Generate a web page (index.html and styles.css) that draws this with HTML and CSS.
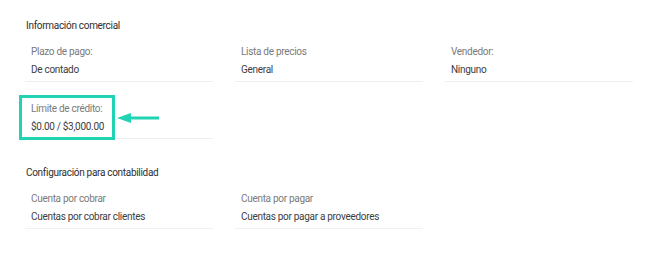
FILE: index.html
```html
<!DOCTYPE html>
<html lang="es">
<head>
    <meta charset="UTF-8">
    <meta name="viewport" content="width=device-width, initial-scale=1.0">
    <title>Cliente</title>
    <link rel="stylesheet" href="styles.css">
</head>
<body>
    <div class="panel">
        <h3 class="section-title">Información comercial</h3>
        <div class="field-grid">
            <div class="field">
                <div class="field-label">Plazo de pago:</div>
                <div class="field-value">De contado</div>
            </div>
            <div class="field">
                <div class="field-label">Lista de precios</div>
                <div class="field-value">General</div>
            </div>
            <div class="field">
                <div class="field-label">Vendedor:</div>
                <div class="field-value">Ninguno</div>
            </div>
            <div class="field highlighted">
                <div class="field-label">Límite de crédito:</div>
                <div class="field-value">$0.00 / $3,000.00</div>
                <span class="mark-box"></span>
                <svg class="mark-arrow" width="44" height="12" viewBox="0 0 44 12">
                    <path d="M12 6 H42" stroke="#1fd3b3" stroke-width="3"/>
                    <path d="M0 6 L14 1 L14 11 Z" fill="#1fd3b3"/>
                </svg>
            </div>
        </div>

        <h3 class="section-title second">Configuración para contabilidad</h3>
        <div class="field-grid">
            <div class="field">
                <div class="field-label">Cuenta por cobrar</div>
                <div class="field-value">Cuentas por cobrar clientes</div>
            </div>
            <div class="field">
                <div class="field-label">Cuenta por pagar</div>
                <div class="field-value">Cuentas por pagar a proveedores</div>
            </div>
        </div>
    </div>
</body>
</html>
```

FILE: styles.css
```css
body {
    margin: 0;
    background: #ffffff;
    font-family: Roboto, "Liberation Sans", Arial, sans-serif;
    font-size: 10px;
    letter-spacing: -0.3px;
}
.panel {
    padding: 17px 25px 0 25px;
}
.section-title {
    margin: 0 0 4px 1px;
    font-size: 10px;
    font-weight: 400;
    line-height: 18px;
    color: #2e2e2e;
}
.section-title.second {
    margin-top: 25px;
}
.field-grid {
    display: grid;
    grid-template-columns: 188px 188px 188px;
    column-gap: 22px;
    row-gap: 14px;
}
.field {
    padding: 4px 6px 2px 6px;
    border-bottom: 1px solid #eef0f3;
}
.field-label {
    line-height: 18px;
    color: #7a7a7a;
}
.field-value {
    line-height: 18px;
    color: #3d3d3d;
}
.highlighted {
    position: relative;
}
.mark-box {
    position: absolute;
    left: -6px;
    top: -1px;
    width: 90px;
    height: 39px;
    border: 3px solid #1fd3b3;
}
.mark-arrow {
    position: absolute;
    left: 92px;
    top: 16px;
}
```
